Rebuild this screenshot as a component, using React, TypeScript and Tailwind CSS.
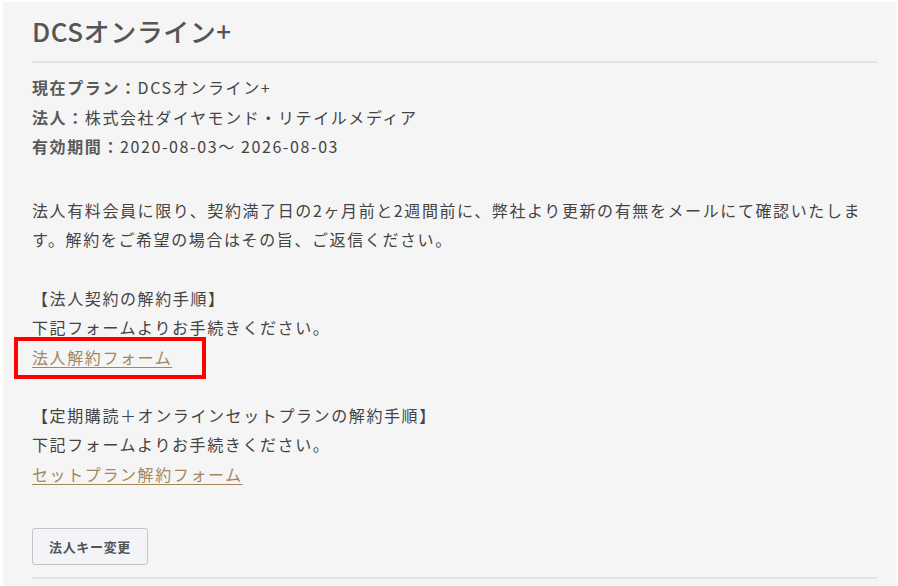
import React from 'react';

const font = { fontFamily: '"Noto Sans CJK JP", "Noto Sans", sans-serif' };

function Line({ children }: { children: React.ReactNode }) {
  return <div className="leading-[29.5px] h-[29.5px] whitespace-nowrap">{children}</div>;
}

export default function App() {
  return (
    <div className="w-[898px] h-[586px] bg-white pt-[2px] pl-[3px] pr-[2px] overflow-hidden" style={font}>
      <div className="relative h-full bg-[#f5f5f5] pl-[29px] pr-[19px]">
        {/* 見出し */}
        <div className="pt-[9px] pb-[10px] border-b-2 border-[#e2e2e2]">
          <h1 className="text-[26px] leading-[40px] font-medium tracking-[0.02em] text-[#555]">DCSオンライン+</h1>
        </div>

        <div className="text-[16px] text-[#444] tracking-[0.1em]">
          <div className="mt-[10px]">
            <Line>
              <span className="font-bold text-[#5a5a5a]">現在プラン：</span>DCSオンライン+
            </Line>
            <Line>
              <span className="font-bold text-[#5a5a5a]">法人：</span>株式会社ダイヤモンド・リテイルメディア
            </Line>
            <Line>
              <span className="font-bold text-[#5a5a5a]">有効期間：</span>2020-08-03～ 2026-08-03
            </Line>
          </div>

          <p className="mt-[34px] leading-[29.5px]">
            法人有料会員に限り、契約満了日の2ヶ月前と2週間前に、弊社より更新の有無をメールにて確認いたします。解約をご希望の場合はその旨、ご返信ください。
          </p>

          <div className="mt-[29px]">
            <Line>【法人契約の解約手順】</Line>
            <Line>下記フォームよりお手続きください。</Line>
            <Line>
              <a href="#" className="text-[#a3875a] underline decoration-[#a3875a] underline-offset-[3px]">
                法人解約フォーム
              </a>
            </Line>
          </div>

          <div className="mt-[28.5px]">
            <Line>【定期購読＋オンラインセットプランの解約手順】</Line>
            <Line>下記フォームよりお手続きください。</Line>
            <Line>
              <a href="#" className="text-[#a3875a] underline decoration-[#a3875a] underline-offset-[3px]">
                セットプラン解約フォーム
              </a>
            </Line>
          </div>
        </div>

        <div className="mt-[39px] pb-[12px] border-b-2 border-[#e2e2e2]">
          <button className="w-[116px] h-[37px] rounded-[3px] border border-[#c4c4c4] bg-[#f2f4f7] text-[13px] font-bold text-[#555] tracking-[0.05em]">
            法人キー変更
          </button>
        </div>

        {/* 注釈枠 */}
        <div className="absolute left-[11px] top-[335px] w-[192px] h-[42px] border-[4px] border-[#ff0000]" />
      </div>
    </div>
  );
}
